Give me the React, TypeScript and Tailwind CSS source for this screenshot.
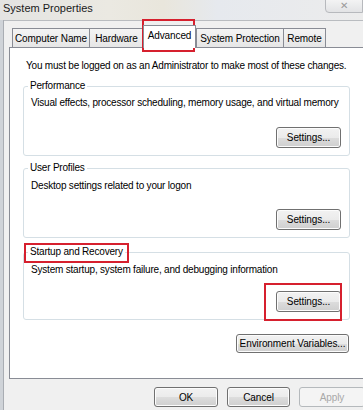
import React from 'react';

const font = { fontFamily: '"Liberation Sans", Arial, sans-serif' };

interface BtnProps {
    label: string;
    className?: string;
    disabled?: boolean;
}

const WinButton: React.FC<BtnProps> = ({ label, className = '', disabled }) => (
    <div
        className={`flex items-center justify-center whitespace-nowrap rounded-[3px] border text-[10px] tracking-[-0.1px] ${
            disabled
                ? 'border-[#b5b9bc] bg-[#f4f4f4] text-[#a8a8a8]'
                : 'border-[#707070] bg-[linear-gradient(#f2f2f2_0%,#ebebeb_50%,#dddddd_51%,#cfcfcf_100%)] text-black shadow-[inset_0_0_0_1px_#fcfcfc]'
        } ${className}`}
    >
        {label}
    </div>
);

interface GroupProps {
    title: string;
    text: string;
    h: string;
    pt: string;
}

const GroupBox: React.FC<GroupProps> = ({ title, text, h, pt }) => (
    <fieldset className={`mx-[13px] flex ${h} min-w-0 flex-col rounded-[3px] border border-[#d5dfe5] px-[7px] pb-[7px]`}>
        <legend className="-ml-[3px] whitespace-nowrap px-[2px] text-[10px] leading-[14px] tracking-[-0.2px]">{title}</legend>
        <div className={`whitespace-nowrap text-[10px] leading-[12px] tracking-[-0.2px] ${pt}`}>{text}</div>
        <div className="mt-auto flex justify-end pr-[1px]">
            <WinButton label="Settings..." className="h-[21px] w-[65px]" />
        </div>
    </fieldset>
);

const tabs = ['Computer Name', 'Hardware', 'Advanced', 'System Protection', 'Remote'];
const tabWidths: Record<string, string> = {
    'Computer Name': 'w-[77px]',
    Hardware: 'w-[54px]',
    Advanced: 'w-[53px]',
    'System Protection': 'w-[87px]',
    Remote: 'w-[43px]',
};

export default function App() {
    return (
        <div
            className="relative h-[410px] w-[363px] overflow-hidden bg-[linear-gradient(90deg,#e4e4e2_0%,#ebe9e2_30%,#e9e6dc_45%,#e6e9ee_60%,#ececec_100%)] text-black"
            style={font}
        >
            {/* title bar */}
            <div className="flex h-[20px] items-start justify-between">
                <div className="pl-[3px] pt-[1px] text-[11px] leading-[14px] text-[#1a1a1a]">System Properties</div>
                <div className="mt-[-3px] flex h-[16px] w-[38px] items-center justify-center rounded-bl-[4px] border border-[#b7b9bd] bg-[linear-gradient(#f6f6f6,#e2e3e5)] text-[10px] text-[#9a9a9a]">
                    ✕
                </div>
            </div>

            <div className="flex h-[390px]">
                {/* aero frame */}
                <div className="w-[4px] shrink-0 border-r border-[#a9adb3] bg-[#cfd3d8]" />

                <div className="flex min-w-0 flex-1 flex-col border-t border-[#b9bcc0] bg-[#f0f0f0] pl-[5px]">
                    {/* tabs */}
                    <div className="flex h-[26px] items-end pl-[3px]">
                        {tabs.map((t) =>
                            t === 'Advanced' ? (
                                <div
                                    key={t}
                                    className={`relative z-10 -mb-px flex h-[23px] ${tabWidths[t]} shrink-0 items-start justify-center whitespace-nowrap border border-b-0 border-[#898c95] bg-white pt-[4px] text-[10px] leading-[12px] tracking-[-0.1px]`}
                                >
                                    {t}
                                </div>
                            ) : (
                                <div
                                    key={t}
                                    className={`flex h-[19px] ${tabWidths[t]} shrink-0 items-center justify-center whitespace-nowrap border border-b-0 border-r-0 border-[#898c95] bg-[linear-gradient(#f4f4f4,#e6e6e6)] text-[10px] tracking-[-0.1px] last:border-r`}
                                >
                                    {t}
                                </div>
                            )
                        )}
                    </div>

                    {/* tab page */}
                    <div className="h-[332px] overflow-hidden border border-r-0 border-[#898c95] bg-white">
                        <div className="whitespace-nowrap pl-[16px] pt-[12px] text-[10px] leading-[12px] tracking-[-0.2px]">
                            You must be logged on as an Administrator to make most of these changes.
                        </div>
                        <div className="mt-[7px]">
                            <GroupBox
                                title="Performance"
                                text="Visual effects, processor scheduling, memory usage, and virtual memory"
                                h="h-[77px]"
                                pt="pt-[4px]"
                            />
                        </div>
                        <div className="mt-[5px]">
                            <GroupBox
                                title="User Profiles"
                                text="Desktop settings related to your logon"
                                h="h-[77px]"
                                pt="pt-[5px]"
                            />
                        </div>
                        <div className="mt-[7px]">
                            <GroupBox
                                title="Startup and Recovery"
                                text="System startup, system failure, and debugging information"
                                h="h-[75px]"
                                pt="pt-[5px]"
                            />
                        </div>
                        <div className="mt-[14px] flex justify-end pr-[14px]">
                            <WinButton label="Environment Variables..." className="h-[19px] w-[113px]" />
                        </div>
                    </div>

                    {/* dialog buttons */}
                    <div className="flex gap-[9px] pl-[145px] pt-[8px]">
                        <WinButton label="OK" className="h-[20px] w-[64px] shrink-0" />
                        <WinButton label="Cancel" className="h-[20px] w-[63px] shrink-0" />
                        <WinButton label="Apply" disabled className="h-[20px] w-[66px] shrink-0" />
                    </div>
                </div>
            </div>

            {/* red annotation boxes */}
            <div className="absolute left-[142px] top-[19px] h-[33px] w-[53px] border-2 border-[#d6202e]" />
            <div className="absolute left-[24px] top-[243px] h-[20px] w-[105px] border-2 border-[#d6202e]" />
            <div className="absolute left-[264px] top-[283px] h-[38px] w-[78px] border-2 border-[#d6202e]" />
        </div>
    );
}
